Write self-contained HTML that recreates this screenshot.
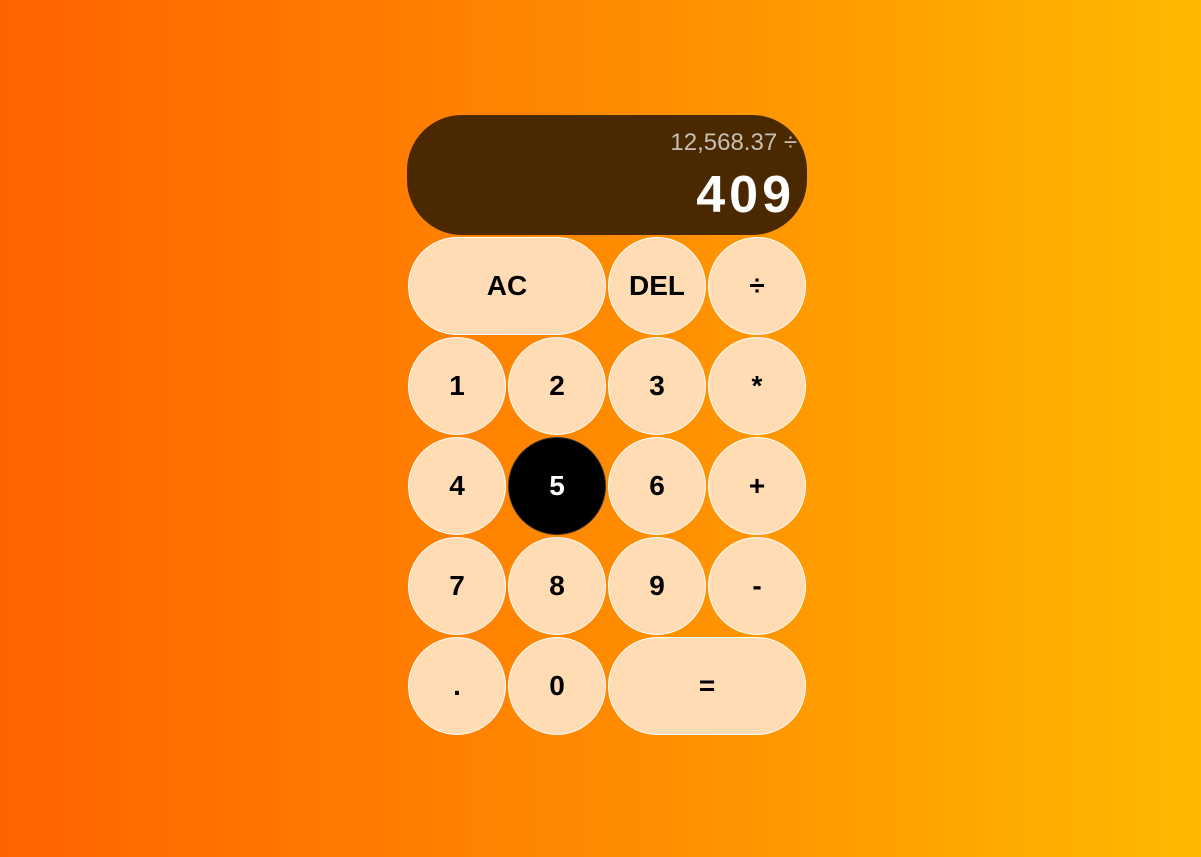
<!DOCTYPE html>
<html><head><style>
html,body{margin:0;height:100%;}
body{width:1201px;height:857px;background:linear-gradient(to right,#ff6300,#ff8a00 50%,#ffb900);position:relative;overflow:hidden;font-family:"Liberation Sans",sans-serif;}
.disp{position:absolute;left:407px;top:115px;width:400px;height:120px;background:#4a2900;border-radius:55px;}
.prev{position:absolute;right:10px;top:14px;color:#c8c0b4;font-size:24px;font-family:"Liberation Sans",sans-serif;}
.cur{position:absolute;right:12px;top:50px;color:#fff;font-size:52px;font-weight:bold;letter-spacing:4px;}
.b{position:absolute;width:96px;height:96px;border:1px solid #fff;border-radius:50px;background:#ffdcb4;display:flex;align-items:center;justify-content:center;font-weight:bold;font-size:28px;color:#000;}
.w{width:196px;}
.k{background:#000;color:#fff;border-color:#333;}
</style></head><body>
<div class="disp"><div class="prev">12,568.37 ÷</div><div class="cur">409</div></div>
<div class="b w" style="left:408px;top:237px">AC</div>
<div class="b" style="left:608px;top:237px">DEL</div>
<div class="b" style="left:708px;top:237px">÷</div>
<div class="b" style="left:408px;top:337px">1</div>
<div class="b" style="left:508px;top:337px">2</div>
<div class="b" style="left:608px;top:337px">3</div>
<div class="b" style="left:708px;top:337px">*</div>
<div class="b" style="left:408px;top:437px">4</div>
<div class="b k" style="left:508px;top:437px">5</div>
<div class="b" style="left:608px;top:437px">6</div>
<div class="b" style="left:708px;top:437px">+</div>
<div class="b" style="left:408px;top:537px">7</div>
<div class="b" style="left:508px;top:537px">8</div>
<div class="b" style="left:608px;top:537px">9</div>
<div class="b" style="left:708px;top:537px">-</div>
<div class="b" style="left:408px;top:637px">.</div>
<div class="b" style="left:508px;top:637px">0</div>
<div class="b w" style="left:608px;top:637px">=</div>
</body></html>
